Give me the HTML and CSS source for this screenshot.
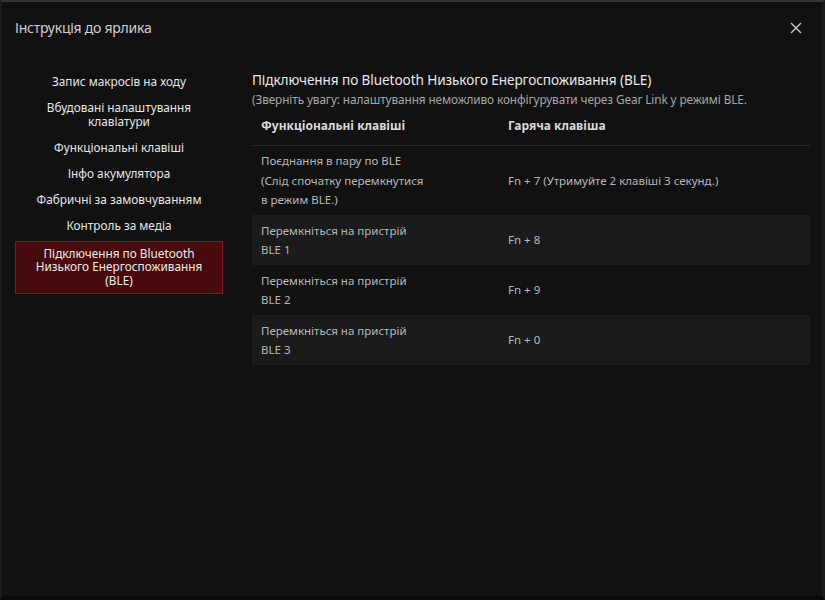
FILE: index.html
```html
<!DOCTYPE html>
<html lang="uk">
<head>
<meta charset="UTF-8">
<meta name="viewport" content="width=device-width, initial-scale=1.0">
<title>Інструкція до ярлика</title>
<link rel="stylesheet" href="styles.css">
</head>
<body>
<div class="window">
    <div class="titlebar">
        <div class="title">Інструкція до ярлика</div>
        <div class="close">
            <svg width="12" height="12" viewBox="0 0 12 12"><path d="M1 1L11 11M11 1L1 11" stroke="#d0d0d0" stroke-width="1.4" fill="none"/></svg>
        </div>
    </div>
    <div class="main">
        <div class="menu">
            <div class="item">Запис макросів на ходу</div>
            <div class="item">Вбудовані налаштування<br>клавіатури</div>
            <div class="item">Функціональні клавіші</div>
            <div class="item">Інфо акумулятора</div>
            <div class="item">Фабричні за замовчуванням</div>
            <div class="item">Контроль за медіа</div>
            <div class="item active">Підключення по Bluetooth<br>Низького Енергоспоживання<br>(BLE)</div>
        </div>
        <div class="content">
            <div class="heading">Підключення по Bluetooth Низького Енергоспоживання (BLE)</div>
            <div class="note">(Зверніть увагу: налаштування неможливо конфігурувати через Gear Link у режимі BLE.</div>
            <div class="table">
                <div class="row head">
                    <div class="cell">Функціональні клавіші</div>
                    <div class="cell">Гаряча клавіша</div>
                </div>
                <div class="row">
                    <div class="cell">Поєднання в пару по BLE<br>(Слід спочатку перемкнутися<br>в режим BLE.)</div>
                    <div class="cell">Fn + 7 (Утримуйте 2 клавіші 3 секунд.)</div>
                </div>
                <div class="row alt">
                    <div class="cell">Перемкніться на пристрій<br>BLE 1</div>
                    <div class="cell">Fn + 8</div>
                </div>
                <div class="row">
                    <div class="cell">Перемкніться на пристрій<br>BLE 2</div>
                    <div class="cell">Fn + 9</div>
                </div>
                <div class="row alt">
                    <div class="cell">Перемкніться на пристрій<br>BLE 3</div>
                    <div class="cell">Fn + 0</div>
                </div>
            </div>
        </div>
    </div>
</div>
</body>
</html>
```

FILE: styles.css
```css
html, body {
    margin:0; padding:0; height:100%;
    background:#0b0b0b;
    font-family:'Noto Sans', sans-serif;
}
.window {
    box-sizing:border-box; width:825px; height:600px;
    background:#111111;
    border-top:2px solid #343434;
    border-left:2px solid #1c1c1c;
    border-right:3px solid #1a1a1a;
    border-bottom:4px solid #080808;
    display:flex; flex-direction:column;
}
.titlebar {
    display:flex; justify-content:space-between; align-items:center;
    padding:14px 20px 0 13px; height:22px;
}
.title {
    font-size:14px; color:#cfcfcf; letter-spacing:-0.25px;
}
.close {
    display:flex; width:12px; height:12px; margin-top:2px;
}
.main {
    display:flex; padding-top:30px;
}
.menu {
    width:208px; margin-left:13px; padding-top:1px;
    display:flex; flex-direction:column;
}
.item {
    font-size:11.8px; line-height:13.5px; padding:6.25px 0;
    text-align:center; color:#e6e6e6;
}
.item.active {
    margin-top:2px; padding:5.25px 0;
    background:#470a0d; border:1px solid #86191d;
    color:#ececec;
}
.content {
    margin-left:29px; width:558px;
}
.heading {
    font-size:13.6px; color:#e8e8e8; line-height:20px; letter-spacing:-0.1px;
    margin-top:2px;
}
.note {
    font-size:11.8px; color:#a6a6a6; margin-top:-1px; line-height:20px; letter-spacing:-0.1px;
}
.table {
    margin-top:2px;
}
.row {
    display:flex; padding:5.5px 0;
    font-size:11.5px; line-height:19.5px; color:#b8b8b8;
}
.row.head {
    font-weight:bold; color:#d9d9d9; font-size:12px;
    padding:5px 0 9px; border-bottom:1px solid #262626;
}
.row.alt {
    background:#1b1b1b;
}
.cell {
    padding-left:9px;
}
.cell:first-child {
    width:238px;
}
.row .cell:last-child {
    align-self:center;
}
```
